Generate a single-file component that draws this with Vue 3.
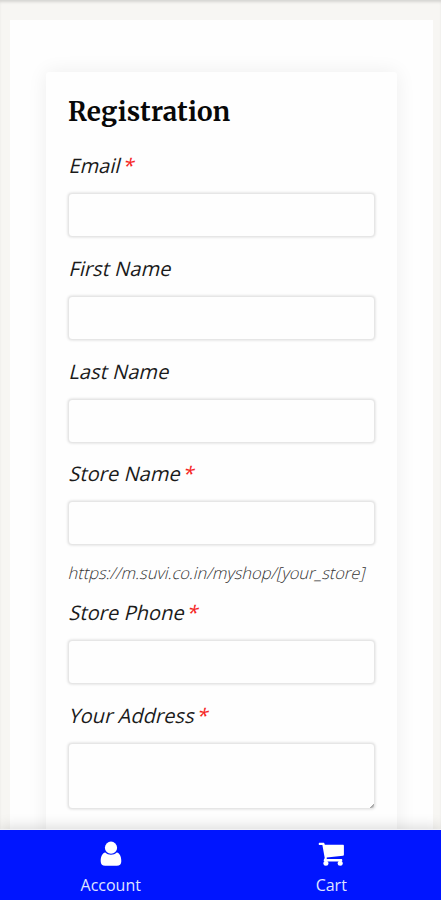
<script setup>
const fields = [
  { id: 'email', label: 'Email', required: true },
  { id: 'first-name', label: 'First Name' },
  { id: 'last-name', label: 'Last Name' },
  { id: 'store-name', label: 'Store Name', required: true, hint: 'https://m.suvi.co.in/myshop/[your_store]' },
  { id: 'store-phone', label: 'Store Phone', required: true },
  { id: 'address', label: 'Your Address', required: true, multiline: true },
]
</script>

<template>
  <div class="screen">
    <main class="page">
      <div class="panel">
        <form class="card">
          <h1>Registration</h1>
          <div v-for="f in fields" :key="f.id" class="field">
            <label :for="f.id">{{ f.label }}<span v-if="f.required" class="star">*</span></label>
            <textarea v-if="f.multiline" :id="f.id" class="control area"></textarea>
            <input v-else :id="f.id" class="control" type="text" />
            <p v-if="f.hint" class="hint">{{ f.hint }}</p>
          </div>
        </form>
      </div>
    </main>
    <nav class="tabs">
      <a class="tab">
        <svg width="22" height="26" viewBox="0 0 22 26" fill="#fff">
          <circle cx="11" cy="6.7" r="6.1" />
          <path d="M5.3 11.6C2 12.2.7 16 .7 20.2c0 3 1.7 4.6 4.5 4.6h11.6c2.8 0 4.5-1.6 4.5-4.6 0-4.2-1.3-8-4.6-8.6-1.6 1.5-3.5 2.2-5.7 2.2s-4.1-.7-5.7-2.2z" />
        </svg>
        <span>Account</span>
      </a>
      <a class="tab">
        <svg width="28" height="26" viewBox="0 0 28 26" fill="#fff">
          <path d="M2.7 1.8h3.6c.9 0 1.2.5 1.5 1.9h18.1c.6 0 1 .4 1 1v9c0 .6-.4 1-.9 1.1L9.7 16.6c.3.6.2 1-.1 1.4h14.6c.7 0 1.1.4 1.1 1.2s-.4 1.2-1.1 1.2H7.8c-.7 0-1.1-.4-1.1-1.2 0-.4.8-1.6 1-2.2L5.4 4H2.7c-.6 0-1-.4-1-1.1s.4-1.1 1-1.1z" />
          <circle cx="8.9" cy="22.2" r="2.5" />
          <circle cx="23.2" cy="22.2" r="2.5" />
        </svg>
        <span>Cart</span>
      </a>
    </nav>
  </div>
</template>

<style>
body {
  margin: 0;
}
</style>

<style scoped>
.screen {
  box-sizing: border-box;
  height: 900px;
  display: flex;
  flex-direction: column;
  overflow: hidden;
  background: #f7f6f3;
  font-family: "Open Sans", "Noto Sans", sans-serif;
}
.page {
  flex: 1;
  min-height: 0;
  overflow: hidden;
  padding: 20px 8px 0 10px;
  box-shadow: inset 0 3px 3px -1px #d5d4d1;
}
.panel {
  height: 900px;
  box-sizing: border-box;
  padding: 52px 36px 0;
  background: #fefefe;
}
.card {
  box-sizing: border-box;
  height: 900px;
  padding: 22px 22px 0;
  background: #fefefe;
  border-radius: 3px;
  box-shadow: 0 0 20px rgba(0, 0, 0, 0.07);
}
h1 {
  margin: 0 0 21.4px;
  font: bold 26px/36px Merriweather, "Liberation Serif", serif;
  letter-spacing: 0.15px;
  color: #080808;
}
.field {
  margin-bottom: 16.6px;
}
label {
  display: block;
  width: max-content;
  margin: 0 0 12px 1.5px;
  font-size: 20px;
  font-weight: 450;
  letter-spacing: 0.07px;
  line-height: 30px;
  color: #1b1b1b;
  white-space: nowrap;
  transform: skewX(-14deg);
}
.star {
  margin-left: 2.5px;
  color: #f52525;
}
.control {
  display: block;
  box-sizing: border-box;
  width: 307px;
  height: 44px;
  margin: 0;
  padding: 8px;
  border: 1px solid #e6e6e6;
  border-radius: 4px;
  background: #fefefe;
  box-shadow: 0 0 3px rgba(0, 0, 0, 0.17);
  outline: none;
}
.area {
  height: 66px;
  resize: none;
  background: linear-gradient(135deg, transparent 50%, #aaa 50%) right 0 bottom 0 / 4px 4px no-repeat #fefefe;
}
.hint {
  width: max-content;
  margin: 14.2px 0 -6px 1px;
  font-size: 16.4px;
  line-height: 28px;
  font-weight: 300;
  color: #333;
  white-space: nowrap;
  transform: skewX(-14deg);
}
.tabs {
  position: relative;
  display: flex;
  height: 70px;
  background: #0015ff;
  box-shadow: 0 -1px 0 #f1f1f4, 0 -2px 14px rgba(0, 0, 0, 0.16);
}
.tab {
  flex: 1;
  display: flex;
  flex-direction: column;
  align-items: center;
  padding: 11px 0 0 1px;
  color: #dfe3ff;
  font-size: 16px;
  line-height: 24px;
}
.tab span {
  margin-top: 6px;
}
</style>
